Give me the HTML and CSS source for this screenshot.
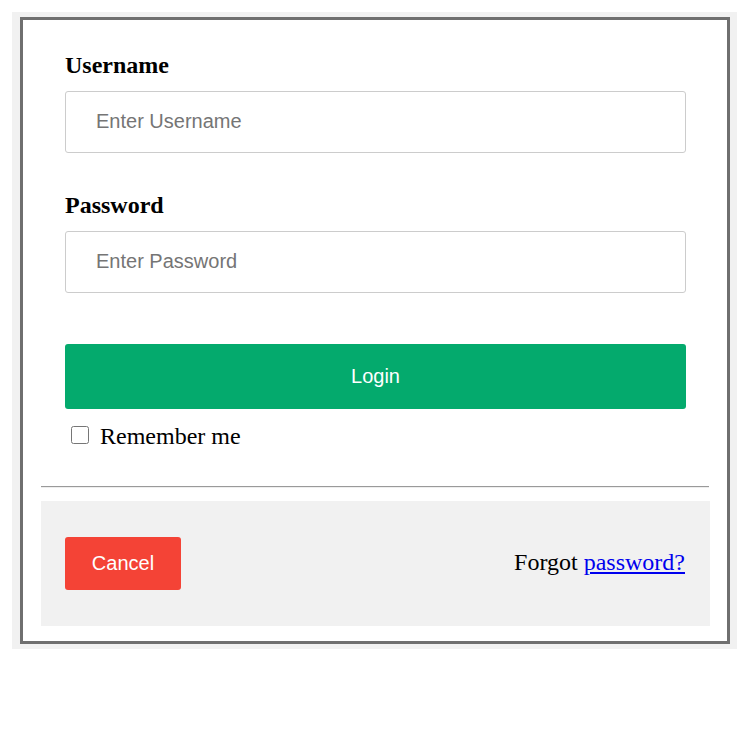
FILE: index.html
```html
<!DOCTYPE html>
<html lang="en">
<head>
<meta charset="utf-8">
<title>Login</title>
<link rel="stylesheet" href="styles.css">
</head>
<body>
<div class="frame">
  <form class="card" onsubmit="return false">
    <div class="main">
      <div class="field">
        <label class="label" for="uname">Username</label>
        <input class="input" id="uname" type="text" placeholder="Enter Username">
      </div>
      <div class="field">
        <label class="label" for="psw">Password</label>
        <input class="input" id="psw" type="password" placeholder="Enter Password">
      </div>
      <button class="btn login" type="submit">Login</button>
      <label class="remember"><input class="check" type="checkbox"><span>Remember me</span></label>
    </div>
    <hr class="rule">
    <div class="footer">
      <button class="btn cancel" type="button">Cancel</button>
      <span class="forgot">Forgot <a href="#">password?</a></span>
    </div>
  </form>
</div>
</body>
</html>
```

FILE: styles.css
```css
* { box-sizing: border-box; }
body {
  margin: 0;
  font-family: "Liberation Serif", "Times New Roman", serif;
  font-size: 24px;
  line-height: 27px;
  color: #000;
  background: #fff;
}
.frame {
  margin: 12px 13px 0 12px;
  background: #f1f1f1;
  padding: 5px 7px 5px 8px;
}
.card {
  display: block;
  margin: 0;
  border: 3px solid #6f6f6f;
  background: #fff;
  padding: 0 17px 15px 18px;
}
.main {
  padding: 32px 24px 0;
}
.field + .field { margin-top: 39px; }
.label {
  display: block;
  font-weight: bold;
  font-size: 24px;
  line-height: 27px;
  margin-bottom: 12px;
}
.input {
  display: block;
  width: 100%;
  height: 62px;
  margin: 0;
  padding: 0 30px 2px;
  border: 1px solid #ccc;
  border-radius: 3px;
  font-family: "Liberation Sans", Arial, sans-serif;
  font-size: 20px;
  color: #000;
  background: #fff;
  outline: none;
}
.input::placeholder { color: #757575; }
.btn {
  display: block;
  border: none;
  border-radius: 3px;
  color: #fff;
  font-family: "Liberation Sans", Arial, sans-serif;
  font-size: 20px;
  line-height: 23px;
  margin: 0;
  cursor: pointer;
}
.login {
  width: 100%;
  height: 65px;
  margin-top: 51px;
  background: #04aa6d;
}
.remember {
  display: flex;
  align-items: center;
  height: 27px;
  margin-top: 14px;
}
.check {
  width: 18px;
  height: 18px;
  margin: -4px 11px 0 6px;
}
.rule {
  height: 0;
  margin: 36px 1px 13px 0;
  border: none;
  border-top: 1px solid #9a9a9a;
  border-bottom: 1px solid #eeeeee;
}
.footer {
  background: #f1f1f1;
  padding: 36px 25px 36px 24px;
  display: flex;
  justify-content: space-between;
  align-items: flex-start;
}
.cancel {
  width: 116px;
  height: 53px;
  background: #f44336;
}
.forgot {
  margin-top: 12px;
  line-height: 27px;
}
.forgot a { color: #0000ee; }
```
